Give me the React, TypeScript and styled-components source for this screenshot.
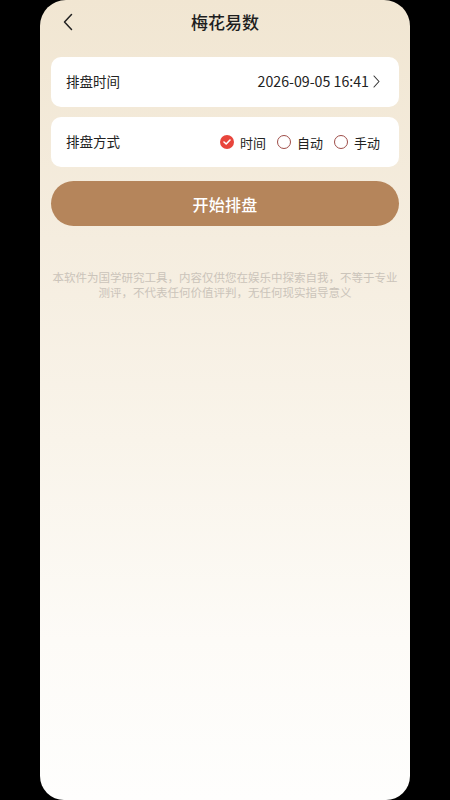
import React, { useState } from "react";
import styled, { createGlobalStyle } from "styled-components";

const Global = createGlobalStyle`
  html, body { margin: 0; padding: 0; background: #000; }
  body { font-family: "Noto Sans CJK SC", "Noto Sans", sans-serif; }
  * { box-sizing: border-box; }
`;

const Screen = styled.div`
  width: 370px;
  height: 800px;
  margin: 0 auto;
  border-radius: 26px 26px 24px 24px;
  overflow: hidden;
  background: linear-gradient(180deg, #f1e6d2 0%, #f5eddf 30%, #f9f4ea 55%, #fdfbf7 80%, #fefefd 100%);
  display: flex;
  flex-direction: column;
`;

const Header = styled.div`
  height: 46px;
  position: relative;
  display: flex;
  align-items: center;
  justify-content: center;
  flex-shrink: 0;
`;

const BackBtn = styled.button`
  position: absolute;
  left: 18px;
  top: 10px;
  width: 20px;
  height: 24px;
  padding: 0;
  border: 0;
  background: none;
  display: flex;
  align-items: center;
  justify-content: center;
`;

const Title = styled.h1`
  margin: 0;
  font-size: 17px;
  font-weight: 500;
  color: #1e1e1e;
  line-height: 1;
  transform: translateY(-2px);
`;

const Body = styled.div`
  padding: 11px 11px 0;
  display: flex;
  flex-direction: column;
`;

const Card = styled.div<{ $gap?: number }>`
  height: 50px;
  background: #fff;
  border-radius: 10px;
  display: flex;
  align-items: center;
  justify-content: space-between;
  padding: 0 19px 0 15px;
  margin-bottom: ${(p) => p.$gap ?? 0}px;
`;

const Label = styled.span`
  font-size: 13.5px;
  color: #222;
  transform: translateY(-1px);
`;

const Value = styled.span`
  display: flex;
  align-items: center;
  gap: 4px;
  font-size: 14.2px;
  color: #222;
  transform: translateY(-1px);
`;

const Radios = styled.div`
  display: flex;
  align-items: center;
  gap: 11px;
`;

const RadioItem = styled.label`
  display: flex;
  align-items: center;
  gap: 6px;
  font-size: 13px;
  color: #222;
  cursor: pointer;
`;

const Dot = styled.span<{ $on: boolean }>`
  width: 14px;
  height: 14px;
  border-radius: 50%;
  display: flex;
  align-items: center;
  justify-content: center;
  background: ${(p) => (p.$on ? "#e8453c" : "transparent")};
  border: ${(p) => (p.$on ? "none" : "1.3px solid #9e4d48")};
`;

const StartButton = styled.button`
  height: 45px;
  border: 0;
  border-radius: 23px;
  background: #b5855b;
  color: #fff;
  font-family: "Noto Sans CJK SC", sans-serif;
  font-size: 16px;
  font-weight: 500;
  margin-top: 14px;
  letter-spacing: 0.3px;
`;

const Notice = styled.p`
  margin: 44px 0 0;
  padding: 0 1px;
  text-align: center;
  font-size: 11.5px;
  line-height: 15px;
  color: #cbc4ba;
`;

const Chevron = ({ dir }: { dir: "left" | "right" }) =>
  dir === "left" ? (
    <svg width="10" height="18" viewBox="0 0 10 18" fill="none">
      <path d="M8.5 1.5 L1.5 9 L8.5 16.5" stroke="#222" strokeWidth="1.5" strokeLinecap="round" strokeLinejoin="round" />
    </svg>
  ) : (
    <svg width="7" height="13" viewBox="0 0 7 13" fill="none">
      <path d="M1 1 L6 6.5 L1 12" stroke="#333" strokeWidth="1.1" strokeLinecap="round" strokeLinejoin="round" />
    </svg>
  );

const options = ["时间", "自动", "手动"];

export default function App() {
  const [mode, setMode] = useState("时间");
  return (
    <>
      <Global />
      <Screen>
        <Header>
          <BackBtn aria-label="返回">
            <Chevron dir="left" />
          </BackBtn>
          <Title>梅花易数</Title>
        </Header>
        <Body>
          <Card $gap={10}>
            <Label>排盘时间</Label>
            <Value>
              2026-09-05 16:41
              <Chevron dir="right" />
            </Value>
          </Card>
          <Card>
            <Label>排盘方式</Label>
            <Radios>
              {options.map((o) => (
                <RadioItem key={o} onClick={() => setMode(o)}>
                  <Dot $on={mode === o}>
                    {mode === o && (
                      <svg width="8" height="6" viewBox="0 0 8 6" fill="none">
                        <path d="M1 3 L3.2 5 L7 1" stroke="#fff" strokeWidth="1.6" strokeLinecap="round" strokeLinejoin="round" />
                      </svg>
                    )}
                  </Dot>
                  {o}
                </RadioItem>
              ))}
            </Radios>
          </Card>
          <StartButton>开始排盘</StartButton>
          <Notice>
            本软件为国学研究工具，内容仅供您在娱乐中探索自我，不等于专业测评，不代表任何价值评判，无任何现实指导意义
          </Notice>
        </Body>
      </Screen>
    </>
  );
}
